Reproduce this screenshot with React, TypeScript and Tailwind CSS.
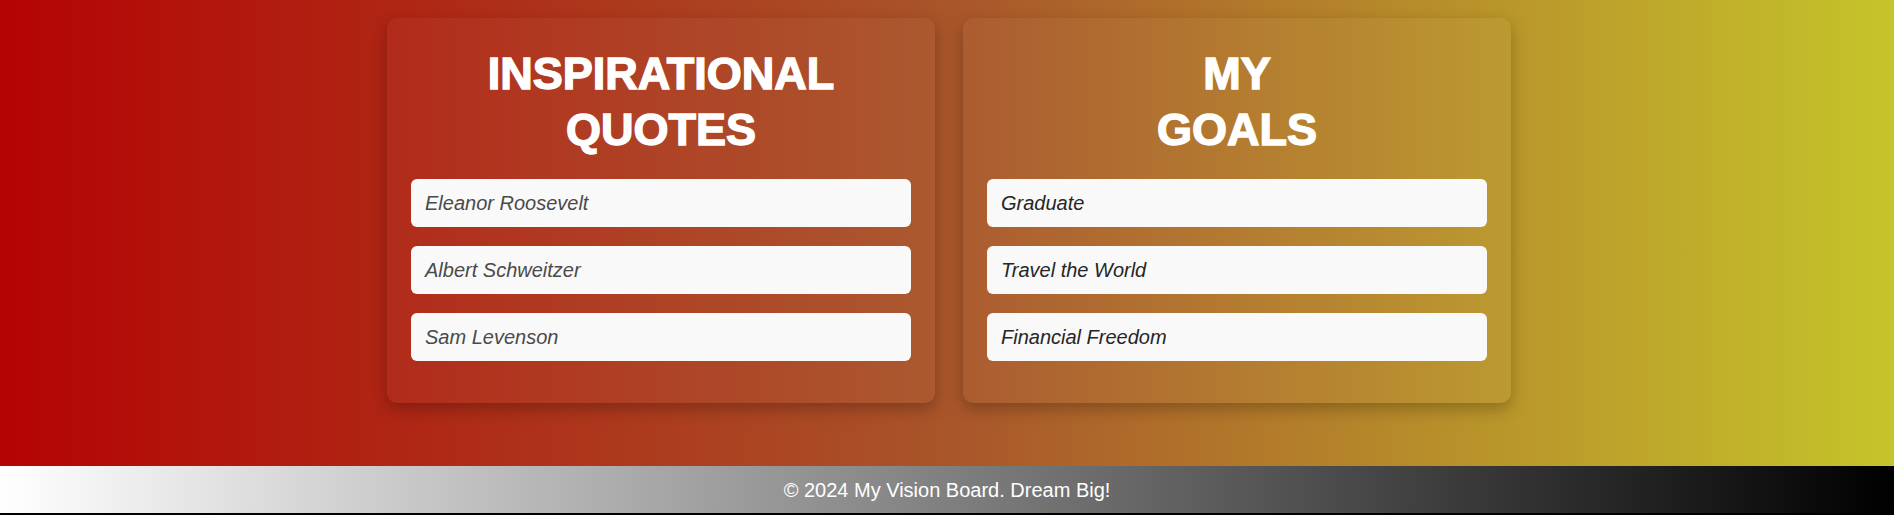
import React from 'react';

const quotes = ['Eleanor Roosevelt', 'Albert Schweitzer', 'Sam Levenson'];
const goals = ['Graduate', 'Travel the World', 'Financial Freedom'];

const Card: React.FC<{ lines: string[]; items: string[]; textColor: string }> = ({ lines, items, textColor }) => {
  return (
    <section className="w-[548px] rounded-[10px] bg-white/[0.03] px-6 pt-[28px] pb-[42px] shadow-[0_6px_16px_rgba(0,0,0,0.25)]">
      <h2 className="mb-[21px] text-center font-['Liberation_Sans',Arial,sans-serif] text-[45px] font-bold leading-[56px] text-white [-webkit-text-stroke:1.4px_white]">
        {lines[0]}
        <br />
        {lines[1]}
      </h2>
      <ul className="flex flex-col gap-[19px]">
        {items.map((item) => (
          <li
            key={item}
            className={`rounded-md bg-[#f9f9f9] px-[14px] py-[13px] text-[20px] italic leading-[22px] ${textColor}`}
          >
            {item}
          </li>
        ))}
      </ul>
    </section>
  );
};

export default function App() {
  return (
    <div className="flex h-[515px] flex-col bg-black font-['Liberation_Sans',Arial,sans-serif]">
      <main className="flex h-[466px] items-start justify-center gap-[28px] bg-[linear-gradient(to_right,#b40404,#a9552a,#c5c42a)] pt-[18px] pl-[4px]">
        <Card lines={['INSPIRATIONAL', 'QUOTES']} items={quotes} textColor="text-[#4a4a4a]" />
        <Card lines={['MY', 'GOALS']} items={goals} textColor="text-[#262626]" />
      </main>
      <footer className="flex h-[47px] items-center justify-center bg-[linear-gradient(to_right,#ffffff,#000000)] text-[20px] text-white">
        <p>&copy; 2024 My Vision Board. Dream Big!</p>
      </footer>
    </div>
  );
}
